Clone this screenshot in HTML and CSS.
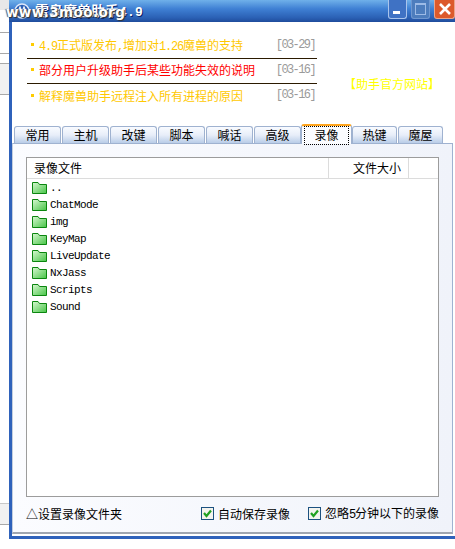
FILE: index.html
```html
<!DOCTYPE html>
<html>
<head>
  <title>魔兽助手</title>
  <link rel="stylesheet" href="styles.css">
</head>
<body>

  <div class="desktop">
    <div class="backdrop">
      <div class="strip s0"></div>
      <div class="strip s1"></div>
      <div class="strip s2"></div>
      <div class="strip s3"></div>
    </div>

    <div class="window">
      <div class="titlebar">
        <svg class="app-icon" width="16" height="16" viewBox="0 0 16 16">
          <circle cx="8" cy="8" r="7" fill="#2a5fb5" stroke="#dfe9fa" stroke-width="1.5"/>
          <path d="M3 11 L6 4 L8 9 L10 4 L13 11" fill="none" stroke="#fff" stroke-width="1.2"/>
        </svg>
        <span class="title-text">雷鸟魔兽助手<span class="title-num">4.9</span></span>
        <div class="win-buttons">
          <div class="win-btn"><span class="min-mark"></span></div>
          <div class="win-btn dim"><span class="max-mark"></span></div>
          <div class="win-btn close">
            <svg width="14" height="14" viewBox="0 0 14 14"><path d="M2 2 L12 12 M12 2 L2 12" stroke="#fff" stroke-width="2.6"/></svg>
          </div>
        </div>
      </div>

      <div class="client">
        <div class="news">
          <div class="news-list">
            <div class="news-row orange"><span class="dot"></span><span class="news-text"><span class="latin">4.9</span>正式版发布<span class="latin">,</span>增加对<span class="latin">1.26</span>魔兽的支持</span><span class="date">[03-29]</span></div>
            <div class="news-row red"><span class="dot"></span><span class="news-text">部分用户升级助手后某些功能失效的说明</span><span class="date">[03-16]</span></div>
            <div class="news-row orange"><span class="dot"></span><span class="news-text">解释魔兽助手远程注入所有进程的原因</span><span class="date">[03-16]</span></div>
          </div>
          <div class="site-link">【助手官方网站】</div>
        </div>

        <div class="tabs">
          <div class="tab">常用</div>
          <div class="tab">主机</div>
          <div class="tab">改键</div>
          <div class="tab">脚本</div>
          <div class="tab">喊话</div>
          <div class="tab">高级</div>
          <div class="tab active"><span class="tab-focus">录像</span></div>
          <div class="tab">热键</div>
          <div class="tab">魔屋</div>
        </div>

        <div class="panel">
          <div class="listbox">
            <div class="list-head">
              <div class="col-name">录像文件</div>
              <div class="col-size">文件大小</div>
              <div class="col-rest"></div>
            </div>
            <div class="list-body" id="files"></div>
          </div>
          <div class="options">
            <div class="folder-link">△设置录像文件夹</div>
            <label class="check"><span class="check-box"><svg width="11" height="11" viewBox="0 0 11 11"><path d="M2 5 L4.5 8 L9 2.5" fill="none" stroke="#21a121" stroke-width="2.2"/></svg></span>自动保存录像</label>
            <label class="check"><span class="check-box"><svg width="11" height="11" viewBox="0 0 11 11"><path d="M2 5 L4.5 8 L9 2.5" fill="none" stroke="#21a121" stroke-width="2.2"/></svg></span><span>忽略<span class="latin">5</span>分钟以下的录像</span></label>
          </div>
        </div>
      </div>
    </div>

    <div class="watermark">www.3moo.org</div>
  </div>

  <script>
    const names = ['..', 'ChatMode', 'img', 'KeyMap', 'LiveUpdate', 'NxJass', 'Scripts', 'Sound'];
    const files = document.getElementById('files');

    const folderIcon = `<svg class="folder" width="15" height="12" viewBox="0 0 15 12">
      <defs><linearGradient id="fg" x1="0" y1="0" x2="1" y2="1"><stop offset="0" stop-color="#d8f8d2"/><stop offset="1" stop-color="#46c446"/></linearGradient></defs>
      <path d="M.5 11.5 V.5 H6 L7.5 2.5 H14.5 V11.5 Z" fill="url(#fg)" stroke="#0b860f"/>
    </svg>`;

    names.forEach(name => {
      const row = document.createElement('div');
      row.className = 'file-row';
      row.innerHTML = folderIcon + `<span class="file-name">${name}</span>`;
      files.appendChild(row);
    });
  </script>

</body>
</html>
```

FILE: styles.css
```css
html, body {
  margin: 0;
  padding: 0;
  background: #fff;
}
body {
  font-family: "Noto Sans CJK SC", "Liberation Sans", sans-serif;
  font-size: 12px;
  color: #000;
}
.desktop {
  position: relative;
  width: 455px;
  height: 549px;
  overflow: hidden;
  display: flex;
  align-items: flex-start;
}
.backdrop {
  width: 9px;
  height: 549px;
  flex: none;
  display: flex;
  flex-direction: column;
}
.strip {
  box-sizing: border-box;
  flex: none;
  background: #f1f1f1;
  border-bottom: 1px solid #a8a8a8;
}
.s0 {
  height: 10px;
  background: #e8e8e8;
  border-bottom: none;
}
.s1 {
  margin-top: 22px;
  height: 22px;
  background: #fff;
  border-top: 1px solid #a8a8a8;
}
.s2 {
  margin-top: 9px;
  height: 32px;
  border-top: 1px solid #a8a8a8;
}
.s3 {
  margin-top: 408px;
  height: 22px;
  border-top: 1px solid #c8c8c8;
}
.window {
  width: 446px;
  height: 539px;
  flex: none;
  box-sizing: border-box;
  display: flex;
  flex-direction: column;
  background: #fff;
  border-left: 3px solid #2f62bb;
  border-bottom: 3px solid #2f62bb;
}
.titlebar {
  height: 22px;
  flex: none;
  margin-left: -3px;
  padding-left: 5px;
  display: flex;
  align-items: center;
  gap: 5px;
  background: linear-gradient(to bottom, #6fb0ea 0%, #3f80d4 40%, #2b61b5 80%, #1f4c9c 100%);
}
.app-icon {
  flex: none;
}
.title-text {
  color: #fff;
  font-weight: bold;
  font-size: 14px;
  line-height: 16px;
  white-space: nowrap;
  text-shadow: 1px 1px 0 #0a246a;
}
.title-num {
  font-family: "Liberation Mono", monospace;
  font-size: 13px;
  letter-spacing: 0.2px;
}
.win-buttons {
  margin-left: auto;
  align-self: flex-start;
  display: flex;
  gap: 4px;
}
.win-btn {
  width: 19px;
  height: 19px;
  box-sizing: border-box;
  border: 1px solid #a9c4ec;
  border-top: none;
  border-radius: 0 0 3px 3px;
  background: #3f72c4;
  display: flex;
  align-items: center;
  justify-content: center;
}
.win-btn.dim {
  background: #4d7dbd;
  border-color: #6f97cf;
}
.win-btn.close {
  width: 21px;
  background: #dc5a2c;
  border-color: #e9a58a;
}
.min-mark {
  width: 7px;
  height: 3px;
  background: #fff;
  margin-top: 7px;
  margin-right: 3px;
}
.max-mark {
  width: 9px;
  height: 9px;
  border: 1px solid #9dbbe6;
  border-top-width: 2px;
}
.client {
  flex: 1;
  display: flex;
  flex-direction: column;
  min-height: 0;
}
.news {
  height: 104px;
  flex: none;
  display: flex;
  box-sizing: border-box;
  padding: 12px 0 0 15px;
}
.news-list {
  width: 290px;
  flex: none;
}
.news-row {
  height: 25px;
  box-sizing: border-box;
  display: flex;
  align-items: center;
  padding-bottom: 3px;
  border-bottom: 1px solid #2b1a00;
}
.news-row:last-child {
  border-bottom: none;
}
.dot {
  width: 3px;
  height: 3px;
  margin: 0 5px 0 4px;
  background: #ffcc00;
  flex: none;
}
.news-text {
  flex: 1;
  white-space: nowrap;
}
.latin {
  font-family: "Liberation Mono", monospace;
  font-size: 12px;
  letter-spacing: -1.2px;
}
.orange .news-text {
  color: #ffc800;
}
.red .news-text {
  color: #ff0000;
}
.date {
  color: #9a9a9a;
  font-family: "Liberation Mono", monospace;
  font-size: 12px;
  letter-spacing: -1.6px;
  margin-right: 2px;
}
.site-link {
  color: #ffff00;
  white-space: nowrap;
  margin: 41px 0 0 27px;
  line-height: 17px;
}
.tabs {
  height: 17px;
  flex: none;
  display: flex;
  padding-left: 2px;
}
.tab {
  width: 47px;
  height: 17px;
  flex: none;
  box-sizing: border-box;
  margin-right: 1px;
  border: 1px solid #9fb2d0;
  border-bottom: none;
  border-radius: 3px 3px 0 0;
  background: linear-gradient(to bottom, #f9fbff 0%, #e8eef9 50%, #b9cde8 100%);
  text-align: center;
  line-height: 16px;
}
.tab.active {
  width: 51px;
  height: 20px;
  margin: -2px 0 0 -1px;
  background: #fbfcff;
  border-top: 2px solid #ffa51e;
  position: relative;
  z-index: 1;
  padding: 0 2px;
  line-height: 15px;
}
.tab.active ~ .tab {
  width: 45px;
}
.tab-focus {
  display: block;
  height: 17px;
  border: 1px dotted #000;
  border-top-style: dotted;
}
.panel {
  flex: 1;
  min-height: 0;
  box-sizing: border-box;
  margin: 0 2px 2px 0;
  padding: 13px 13px 0 13px;
  border: 1px solid #9fb2d0;
  border-left-color: #c3cede;
  border-bottom: 2px solid #a0a6b0;
  background: linear-gradient(to right, #fbfcff, #f0f3fa);
  display: flex;
  flex-direction: column;
}
.listbox {
  height: 340px;
  flex: none;
  box-sizing: border-box;
  border: 1px solid #9c9c9c;
  background: #fff;
}
.list-head {
  height: 21px;
  box-sizing: border-box;
  display: flex;
  line-height: 20px;
  border-bottom: 1px solid #dcdcdc;
}
.col-name {
  width: 302px;
  box-sizing: border-box;
  padding-left: 7px;
  border-right: 1px solid #dcdcdc;
}
.col-size {
  width: 80px;
  box-sizing: border-box;
  padding-right: 7px;
  text-align: right;
  border-right: 1px solid #dcdcdc;
}
.col-rest {
  flex: 1;
}
.list-body {
  padding-left: 5px;
}
.file-row {
  height: 17px;
  display: flex;
  align-items: center;
  gap: 3px;
}
.folder {
  flex: none;
}
.file-name {
  font-family: "Liberation Mono", monospace;
  font-size: 11px;
  letter-spacing: -0.6px;
}
.options {
  flex: 1;
  display: flex;
  align-items: center;
  padding-bottom: 3px;
}
.folder-link {
  width: 175px;
  flex: none;
}
.check {
  display: flex;
  align-items: center;
  gap: 4px;
  margin-right: 18px;
  white-space: nowrap;
}
.check-box {
  width: 13px;
  height: 13px;
  box-sizing: border-box;
  border: 1px solid #1c5180;
  background: #f4f4ee;
  display: flex;
  align-items: center;
  justify-content: center;
}
.watermark {
  position: absolute;
  left: 6px;
  top: 4px;
  color: #fff;
  font-family: "DejaVu Sans", sans-serif;
  font-weight: bold;
  font-size: 13.5px;
  letter-spacing: 0.4px;
  text-shadow: 1px 1px 1px #333, -1px 0 1px #555;
}
```
